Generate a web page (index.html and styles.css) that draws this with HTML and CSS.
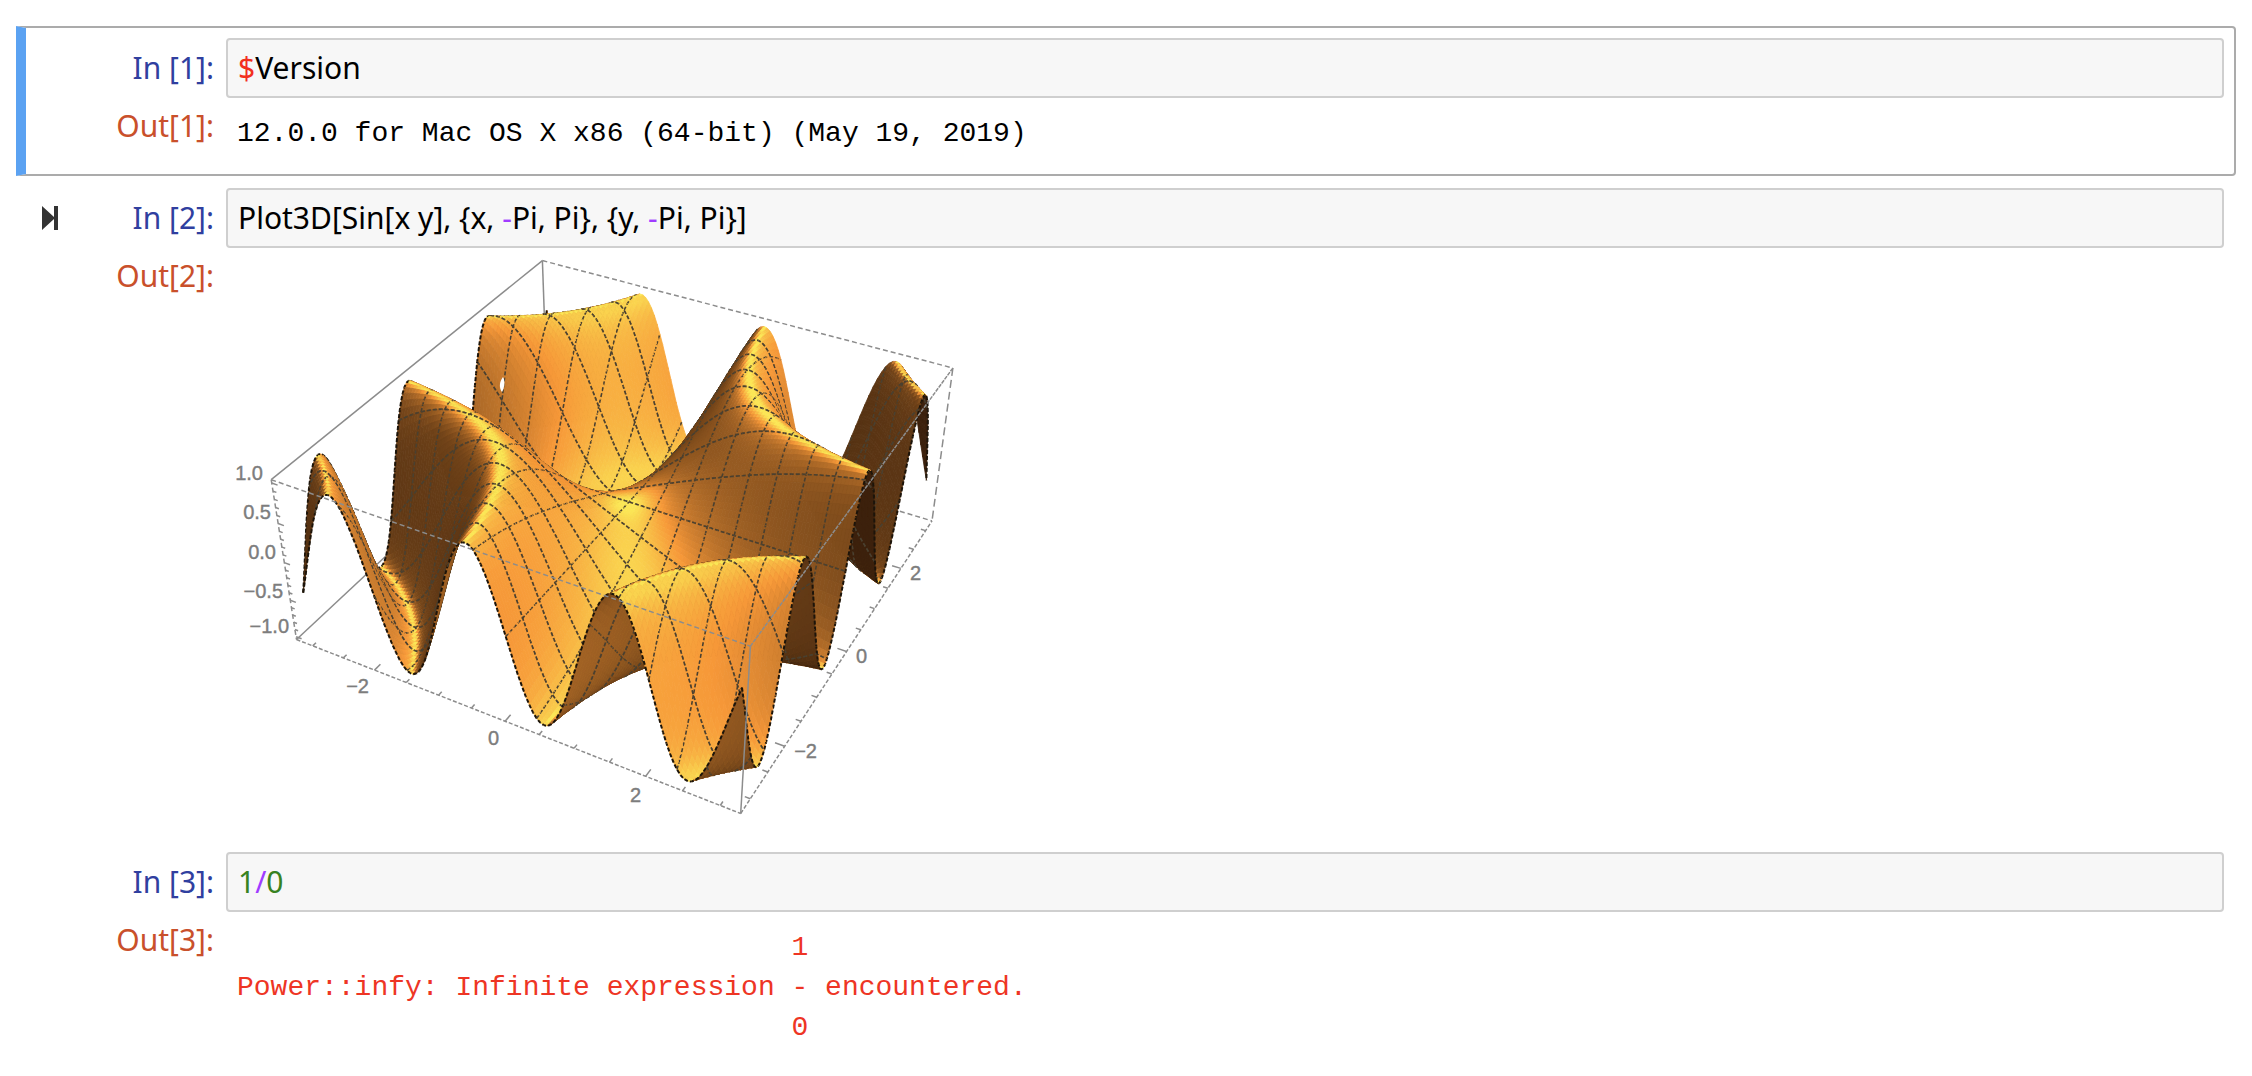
FILE: index.html
```html
<!DOCTYPE html>
<html lang="en">
<head>
<meta charset="UTF-8" />
<meta name="viewport" content="width=device-width, initial-scale=1" />
<title>Notebook</title>
<link rel="stylesheet" href="styles.css">
</head>
<body>

  <main class="notebook">

    <section class="cell selected">
      <div class="row">
        <div class="prompt in">In&nbsp;[1]:</div>
        <pre class="input"><span class="dollar">$</span>Version</pre>
      </div>
      <div class="row">
        <div class="prompt out">Out[1]:</div>
        <pre class="output">12.0.0 for Mac OS X x86 (64-bit) (May 19, 2019)</pre>
      </div>
    </section>

    <section class="cell">
      <div class="row">
        <div class="prompt in">
          <button class="run" type="button" aria-label="Run this cell">
            <svg viewBox="0 0 17 24" width="17" height="24"><path d="M0 0 L12 11 V0 H16 V24 H12 V13 L0 24 Z" /></svg>
          </button>
          In&nbsp;[2]:
        </div>
        <pre class="input">Plot3D[Sin[x y], {x, <span class="op">-</span>Pi, Pi}, {y, <span class="op">-</span>Pi, Pi}]</pre>
      </div>
      <div class="row">
        <div class="prompt out">Out[2]:</div>
        <div class="output plot">
          <svg viewBox="0 0 720 560" width="720" height="560">
            <g id="boxBack" class="box"></g>
            <g id="surface"></g>
            <path class="gap" d="M267 119 C269 122 269 129 266 134 C263 130 263 124 267 119 Z" />
            <g id="boxFront" class="box"></g>
            <g class="ticks">
              <text x="27" y="222">1.0</text>
              <text x="35" y="261">0.5</text>
              <text x="40" y="301">0.0</text>
              <text x="47" y="340">−0.5</text>
              <text x="53" y="375">−1.0</text>
              <text x="133" y="435">−2</text>
              <text x="263" y="487">0</text>
              <text x="405" y="544">2</text>
              <text x="581" y="500">−2</text>
              <text x="631" y="405">0</text>
              <text x="685" y="322">2</text>
            </g>
          </svg>
        </div>
      </div>
    </section>

    <section class="cell">
      <div class="row">
        <div class="prompt in">In&nbsp;[3]:</div>
        <pre class="input"><span class="num">1</span><span class="op">/</span><span class="num">0</span></pre>
      </div>
      <div class="row">
        <div class="prompt out">Out[3]:</div>
        <pre class="output error">                                 1
Power::infy: Infinite expression - encountered.
                                 0</pre>
      </div>
    </section>

  </main>

<script src="plot.js"></script>
</body>
</html>
```

FILE: styles.css
```css
* {
  box-sizing: border-box;
}
body {
  margin: 0;
  padding: 26px 16px;
  background: #fff;
  color: #000;
  font-family: "Noto Sans", "Open Sans", sans-serif;
  font-size: 30px;
  line-height: 40px;
}
pre {
  margin: 0;
  font-family: inherit;
}

/* Cells */
.cell {
  padding: 10px;
  border: 2px solid transparent;
  border-radius: 4px;
}
.cell.selected {
  border-color: #ababab;
  border-left: 10px solid #5ba2f2;
  border-radius: 0 4px 4px 0;
  padding-left: 2px;
}
.row {
  display: flex;
  align-items: flex-start;
}

/* Prompts */
.prompt {
  flex: 0 0 198px;
  display: flex;
  align-items: center;
  justify-content: flex-end;
  padding: 10px 12px 0 14px;
}
.in {
  color: #303f9f;
}
.out {
  color: #c9502b;
  padding-top: 8px;
}
.run {
  display: flex;
  margin-right: auto;
  padding: 0;
  border: 0;
  background: none;
  cursor: pointer;
}
.run path {
  fill: #333;
}

/* Input */
.input {
  flex: 1;
  padding: 8px 10px;
  border: 2px solid #cfcfcf;
  border-radius: 4px;
  background: #f7f7f7;
}
.dollar {
  color: #f2301f;
}
.op {
  color: #a03cff;
}
.num {
  color: #38821f;
}

/* Output */
.output {
  flex: 1;
  min-width: 0;
  padding: 16px 11px 10px;
  font-family: "Liberation Mono", "Courier New", monospace;
  font-size: 28px;
}
.error {
  color: #ee3524;
}

/* Plot */
.plot {
  padding: 10px;
}
.plot svg {
  display: block;
}
.box path {
  fill: none;
  stroke: #8c8c8c;
  stroke-width: 1.5;
}
.gap {
  fill: #fff;
}
.ticks {
  fill: #7d7d7d;
  stroke: #7d7d7d;
  stroke-width: 0.4;
  font-family: "Liberation Sans", Arial, sans-serif;
  font-size: 20px;
  text-anchor: end;
}
```

FILE: plot.js
```js
// Plot3D[Sin[x y], {x, -Pi, Pi}, {y, -Pi, Pi}]
const NS = "http://www.w3.org/2000/svg";
const N = 128;
const MESH = 8;
const PAD = 1.04;
const SCALE = 1638;
const CENTER = [393, 244];

const dot = (a, b) => a[0] * b[0] + a[1] * b[1] + a[2] * b[2];
const cross = (a, b) => [
  a[1] * b[2] - a[2] * b[1],
  a[2] * b[0] - a[0] * b[2],
  a[0] * b[1] - a[1] * b[0]
];
const unit = a => {
  const l = Math.hypot(...a);
  return a.map(v => v / l);
};

// camera
const eye = [1.3, -2.4, 2];
const back = unit(eye);
const right = unit(cross([0, 0, 1], back));
const up = cross(back, right);

// p is in box coordinates: x, y in -0.5..0.5, z in -0.2..0.2
function project(p) {
  const d = Math.hypot(...eye) - dot(back, p);
  return [
    CENTER[0] + SCALE * dot(right, p) / d,
    CENTER[1] - SCALE * dot(up, p) / d
  ];
}

const toBox = (x, y, z) => [
  x / (2 * Math.PI * PAD),
  y / (2 * Math.PI * PAD),
  z * 0.2 / PAD
];

// lights and highlight, in camera coordinates
const lights = [[0, 1, 1], [1, 1, 1], [1, 0, 1]].map(unit);
const sideShine = unit([0.383, 0, 0.924]);

function shade(x, y, p) {
  const k = 0.4 * Math.PI;
  const c = Math.cos(x * y) * k;
  let n = unit([-y * c, -x * c, 1]);
  const view = unit([eye[0] - p[0], eye[1] - p[1], eye[2] - p[2]]);
  if (dot(n, view) < 0) n = n.map(v => -v);
  const cam = [dot(n, right), dot(n, up), dot(n, back)];
  let lit = 0;
  lights.forEach(l => {
    lit += Math.max(0, dot(cam, l));
  });
  const top = Math.pow(Math.max(0, n[2]), 10);
  const side = n[0] > 0 ? Math.pow(Math.max(0, dot(cam, sideShine)), 8) : 0;
  // brown in the shade, orange half way, yellow in full light
  const g = Math.min(0.9, 0.13 + 0.46 * Math.pow(lit / 2.2, 0.85) + 0.33 * top + 0.2 * side);
  const r = Math.min(0.93 + 0.06 * g, 0.03 + 1.57 * g);
  const b = 0.37 * g;
  return `rgb(${[r, g, b].map(v => Math.round(v * 255))})`;
}

function add(parent, d, attrs) {
  const el = document.createElementNS(NS, "path");
  el.setAttribute("d", d);
  for (const key in attrs) el.setAttribute(key, attrs[key]);
  parent.appendChild(el);
}

const line = (a, b) => `M${a[0].toFixed(1)} ${a[1].toFixed(1)}L${b[0].toFixed(1)} ${b[1].toFixed(1)}`;

function drawSurface() {
  const g = document.createDocumentFragment();
  const at = i => -Math.PI + 2 * Math.PI * i / N;
  const pts = [];
  for (let i = 0; i <= N; i++) {
    pts.push([]);
    for (let j = 0; j <= N; j++) {
      pts[i].push(project(toBox(at(i), at(j), Math.sin(at(i) * at(j)))));
    }
  }

  // running lengths keep the dashes in step from one cell to the next
  const alongX = pts.map(r => r.map(() => 0));
  const alongY = pts.map(r => r.map(() => 0));
  for (let i = 0; i <= N; i++) {
    for (let j = 0; j <= N; j++) {
      const p = pts[i][j];
      if (i) alongX[i][j] = alongX[i - 1][j] + Math.hypot(p[0] - pts[i - 1][j][0], p[1] - pts[i - 1][j][1]);
      if (j) alongY[i][j] = alongY[i][j - 1] + Math.hypot(p[0] - pts[i][j - 1][0], p[1] - pts[i][j - 1][1]);
    }
  }

  const mesh = (a, b, offset, edge) => add(g, line(a, b), {
    stroke: edge ? "#1c140a" : "#4a4030",
    "stroke-width": edge ? 2 : 1.6,
    "stroke-dasharray": "4 2",
    "stroke-dashoffset": offset.toFixed(1)
  });

  // far cells first
  for (let j = N - 1; j >= 0; j--) {
    for (let i = 0; i < N; i++) {
      const a = pts[i][j], b = pts[i + 1][j], c = pts[i + 1][j + 1], d = pts[i][j + 1];
      const x = (at(i) + at(i + 1)) / 2;
      const y = (at(j) + at(j + 1)) / 2;
      const fill = shade(x, y, toBox(x, y, Math.sin(x * y)));
      const quad = "M" + [a, b, c, d].map(p => p.map(v => v.toFixed(1)).join(" ")).join("L") + "Z";
      add(g, quad, { fill: fill, stroke: fill, "stroke-width": 0.8 });
    }
    // mesh lines of this strip, over its cells
    for (let i = 0; i < N; i++) {
      if (j % MESH === 0) mesh(pts[i][j], pts[i + 1][j], alongX[i][j], j === 0);
      if ((j + 1) % MESH === 0 && j + 1 < N) mesh(pts[i][j + 1], pts[i + 1][j + 1], alongX[i][j + 1], false);
    }
    for (let i = 0; i <= N; i += MESH) {
      mesh(pts[i][j], pts[i][j + 1], alongY[i][j], i === 0 || i === N);
    }
  }
  document.getElementById("surface").appendChild(g);
}

function drawBox() {
  const backBox = document.getElementById("boxBack");
  const front = document.getElementById("boxFront");
  const edge = (g, a, b, dash) => add(g, line(project(a), project(b)), dash ? { "stroke-dasharray": dash } : {});
  const h = 0.5, t = 0.2;

  edge(backBox, [-h, h, t], [-h, -h, t]);
  edge(backBox, [-h, h, t], [h, h, t], "5 3");
  edge(backBox, [-h, h, t], [-h, h, -t]);
  edge(backBox, [-h, h, -t], [-h, -h, -t]);
  edge(backBox, [-h, h, -t], [h, h, -t], "5 3");
  edge(backBox, [h, h, t], [h, h, -t], "8 4");
  edge(backBox, [-h, -h, t], [-h, -h, -t], "5 3");
  edge(backBox, [-h, -h, -t], [h, -h, -t], "4 2");
  edge(backBox, [h, -h, -t], [h, h, -t], "4 2");
  edge(front, [-h, -h, t], [h, -h, t], "5 3");
  edge(front, [h, -h, t], [h, h, t], "4 1");
  edge(front, [h, -h, t], [h, -h, -t]);

  for (let v = -3; v <= 3; v += 0.5) {
    const p = v / (2 * Math.PI * PAD);
    const len = v % 2 === 0 ? 0.02 : 0.011;
    edge(backBox, [p, -h, -t], [p, -h + len, -t]);
    edge(backBox, [h, p, -t], [h - len, p, -t]);
  }
  for (let v = -10; v <= 10; v++) {
    const z = v / 10 * 0.2 / PAD;
    edge(backBox, [-h, -h, z], [-h + (v % 5 ? 0.008 : 0.014), -h, z]);
  }
}

drawBox();
drawSurface();
```
